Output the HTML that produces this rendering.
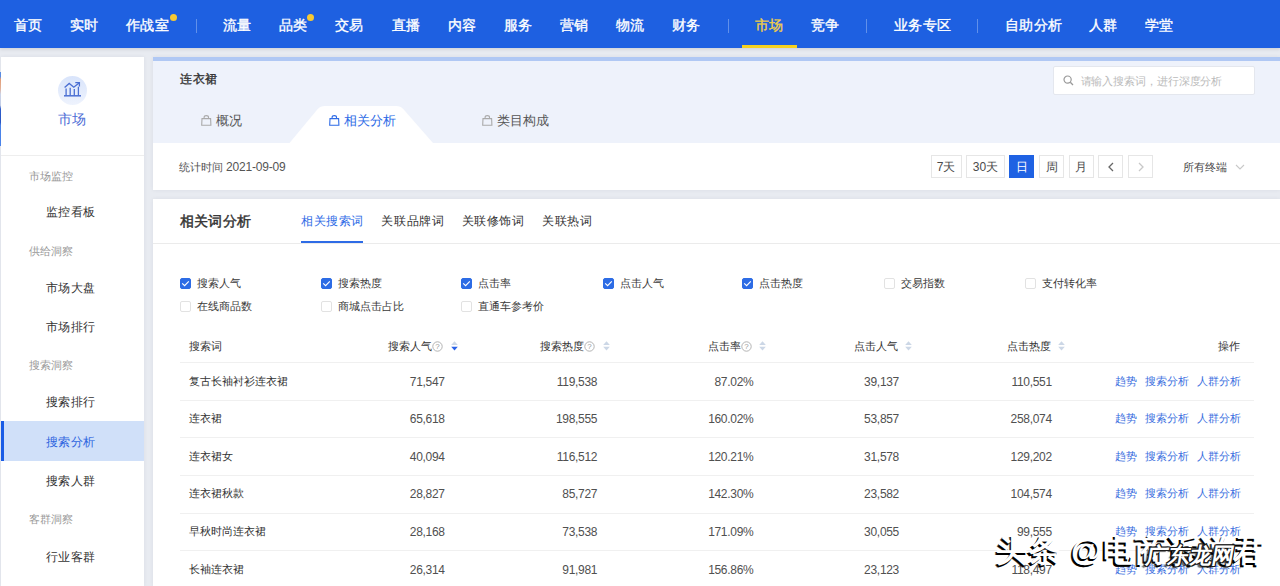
<!DOCTYPE html>
<html><head><meta charset="utf-8">
<style>
*{margin:0;padding:0;box-sizing:border-box}
html,body{width:1280px;height:586px;overflow:hidden}
body{position:relative;background:#e8ebf1;font-family:"Liberation Sans",sans-serif;color:#333}
.a{position:absolute;white-space:nowrap}
#nav{position:absolute;left:0;top:0;width:1280px;height:48px;background:#1e60e1;box-shadow:0 1px 4px rgba(0,0,0,.13);z-index:2}
.ni{position:absolute;top:16px;font-size:14px;letter-spacing:0.4px;line-height:18px;color:#fff;font-weight:500;-webkit-text-stroke:0.35px currentColor;white-space:nowrap}
.sep{position:absolute;top:19px;width:1px;height:14px;background:rgba(255,255,255,.3)}
.dot{position:absolute;width:7px;height:7px;border-radius:50%;background:#f6c933}
#side{position:absolute;left:1px;top:57px;width:143px;height:529px;background:#fff;box-shadow:0 0 4px rgba(40,50,70,.07)}
.sl{position:absolute;left:28px;margin-top:0.5px;font-size:11px;line-height:14px;color:#999;white-space:nowrap}
.si{position:absolute;left:44.5px;font-size:12px;letter-spacing:0.6px;line-height:16px;color:#333;white-space:nowrap}
.card{position:absolute;background:#fff;box-shadow:0 0 4px rgba(40,50,70,.07)}
.cb{position:absolute;width:11px;height:11px;border:1px solid #e2e2e2;border-radius:2px;background:#fff}
.cb.on{background:#2d6ce5;border-color:#2d6ce5}
.t11{position:absolute;font-size:11px;line-height:14px;color:#333;white-space:nowrap}
.num{position:absolute;font-size:12px;letter-spacing:-0.3px;line-height:14px;color:#505050;white-space:nowrap;text-align:right}
.lk{position:absolute;font-size:11px;line-height:14px;color:#3a6fe0;white-space:nowrap}
.btn{position:absolute;top:98px;height:23px;border:1px solid #e6e6e6;background:#fff;font-size:12px;line-height:22px;text-align:center;color:#4a4a4a}
</style></head><body>
<div id="nav">
<div class="ni" style="left:14px">首页</div>
<div class="ni" style="left:70px">实时</div>
<div class="ni" style="left:126px">作战室</div>
<div class="ni" style="left:223px">流量</div>
<div class="ni" style="left:279px">品类</div>
<div class="ni" style="left:335px">交易</div>
<div class="ni" style="left:392px">直播</div>
<div class="ni" style="left:448px">内容</div>
<div class="ni" style="left:504px">服务</div>
<div class="ni" style="left:560px">营销</div>
<div class="ni" style="left:616px">物流</div>
<div class="ni" style="left:672px">财务</div>
<div class="ni" style="left:811px">竞争</div>
<div class="ni" style="left:894px">业务专区</div>
<div class="ni" style="left:1005px">自助分析</div>
<div class="ni" style="left:1089px">人群</div>
<div class="ni" style="left:1145px">学堂</div>
<div class="ni" style="left:755px;color:#f3cf45">市场</div>
<div class="a" style="left:742px;top:45px;width:55px;height:3px;background:#f6d11e"></div>
<div class="sep" style="left:196px"></div>
<div class="sep" style="left:728px"></div>
<div class="sep" style="left:866px"></div>
<div class="sep" style="left:977px"></div>
<div class="dot" style="left:170px;top:14px"></div>
<div class="dot" style="left:307px;top:14px"></div>
</div>
<div class="a" style="left:0;top:72px;width:1px;height:74px;background:linear-gradient(#5b8fe8 0,#5b8fe8 6%,#e8a27a 10%,#e9b59a 22%,#d0d8ec 30%,#c9d3ec 45%,#2f5fcf 50%,#2a58c8 68%,#4c86ee 72%,#4c86ee 100%)"></div>
<div id="side">
<div class="a" style="left:57px;top:19px;width:29px;height:29px;border-radius:50%;background:linear-gradient(#d9e4fb,#eef3fd)"></div>
<svg class="a" style="left:61px;top:23px" width="21" height="21" viewBox="0 0 21 21"><g fill="none" stroke="#4b6fd3" stroke-width="1.3"><path d="M4.1 15.6V8.6M8.2 15.6V7.8M12.3 15.6V9M16.4 15.6V6.8"/><path d="M2 15.8H19" stroke-width="1.5"/><path d="M2.6 7.6L7.2 3.4L11.8 7.2L17 3"/><path d="M13.3 2.6H17.4V6.6"/></g></svg>
<div class="a" style="left:57px;top:53px;font-size:14px;line-height:18px;color:#4d6dd6">市场</div>
<div class="a" style="left:0;top:98px;width:143px;height:1px;background:#eeeeee"></div>
<div class="a" style="left:0;top:364px;width:143px;height:40px;background:#d0e0f9"></div>
<div class="a" style="left:0;top:364px;width:3px;height:40px;background:#1a5ce6"></div>
<div class="si" style="top:376.8px;color:#2d64df">搜索分析</div>
<div class="sl" style="top:111px">市场监控</div>
<div class="si" style="top:147.0px">监控看板</div>
<div class="sl" style="top:186px">供给洞察</div>
<div class="si" style="top:222.8px">市场大盘</div>
<div class="si" style="top:261.8px">市场排行</div>
<div class="sl" style="top:300px">搜索洞察</div>
<div class="si" style="top:336.8px">搜索排行</div>
<div class="si" style="top:415.8px">搜索人群</div>
<div class="sl" style="top:454px">客群洞察</div>
<div class="si" style="top:491.8px">行业客群</div>
</div>
<div class="card" style="left:153px;top:57px;width:1127px;height:133px">
<div class="a" style="left:0;top:0;width:1127px;height:86px;background:#eef2fb"></div>
<div class="a" style="left:0;top:0;width:1127px;height:4px;background:#b0c8f4"></div>
<div class="a" style="left:27px;top:13px;font-size:12px;letter-spacing:0.6px;line-height:18px;font-weight:500;-webkit-text-stroke:0.35px #333;color:#333">连衣裙</div>
<svg class="a" style="left:130px;top:47px" width="160" height="39" viewBox="0 0 160 39"><path d="M6.5 39 L34.5 5.2 Q37.5 2 42 2 L113 2 Q117.5 2 120.5 5.2 L150 39 Z" fill="#fff"/></svg>
<div class="a" style="left:48px;top:58px"><svg style="display:block" width="11" height="11" viewBox="0 0 11 11"><path d="M1 3.6H9.6L9.9 10.2H0.7Z M3.1 3.6V2.2Q3.1 0.6 5.3 0.6Q7.5 0.6 7.5 2.2V3.6" fill="none" stroke="#aaa" stroke-width="1.1"/></svg></div>
<div class="a" style="left:63px;top:56px;font-size:13px;line-height:16px;color:#555">概况</div>
<div class="a" style="left:176px;top:58px"><svg style="display:block" width="11" height="11" viewBox="0 0 11 11"><path d="M1 3.6H9.6L9.9 10.2H0.7Z M3.1 3.6V2.2Q3.1 0.6 5.3 0.6Q7.5 0.6 7.5 2.2V3.6" fill="none" stroke="#2e6be6" stroke-width="1.1"/></svg></div>
<div class="a" style="left:191px;top:56px;font-size:13px;line-height:16px;color:#2e6be6">相关分析</div>
<div class="a" style="left:329px;top:58px"><svg style="display:block" width="11" height="11" viewBox="0 0 11 11"><path d="M1 3.6H9.6L9.9 10.2H0.7Z M3.1 3.6V2.2Q3.1 0.6 5.3 0.6Q7.5 0.6 7.5 2.2V3.6" fill="none" stroke="#aaa" stroke-width="1.1"/></svg></div>
<div class="a" style="left:344px;top:56px;font-size:13px;line-height:16px;color:#555">类目构成</div>
<div class="a" style="left:26px;top:103px;font-size:11px;line-height:14px;color:#555">统计时间 <span style="font-size:12px;letter-spacing:-0.2px">2021-09-09</span></div>
<div class="a" style="left:900px;top:9px;width:202px;height:28.5px;background:#fff;border:1px solid #e4e7ee;border-radius:2px"></div>
<svg class="a" style="left:909.5px;top:18px" width="11" height="11" viewBox="0 0 11 11"><circle cx="4.6" cy="4.6" r="3.6" fill="none" stroke="#999" stroke-width="1.2"/><path d="M7.3 7.3L10 10" stroke="#999" stroke-width="1.3"/></svg>
<div class="a" style="left:927.5px;top:16.5px;font-size:11px;line-height:14px;color:#bbb;letter-spacing:-0.1px">请输入搜索词，进行深度分析</div>
<div class="btn" style="left:777.6px;width:31px">7天</div>
<div class="btn" style="left:813px;width:39px">30天</div>
<div class="btn" style="left:856px;width:25px;background:#1f62e3;border-color:#1f62e3;color:#fff">日</div>
<div class="btn" style="left:886px;width:25px">周</div>
<div class="btn" style="left:915.6px;width:25px">月</div>
<div class="btn" style="left:945px;width:25px"><svg width="8" height="10" viewBox="0 0 8 10" style="margin-top:6px"><path d="M6 1L2 5L6 9" fill="none" stroke="#666" stroke-width="1.3"/></svg></div>
<div class="btn" style="left:975px;width:25px"><svg width="8" height="10" viewBox="0 0 8 10" style="margin-top:6px"><path d="M2 1L6 5L2 9" fill="none" stroke="#c8c8c8" stroke-width="1.3"/></svg></div>
<div class="a" style="left:1030px;top:103px;font-size:11px;line-height:14px;color:#4a4a4a">所有终端</div>
<svg class="a" style="left:1081.5px;top:106px" width="10" height="8" viewBox="0 0 10 8"><path d="M1 2L5 6L9 2" fill="none" stroke="#c8c8c8" stroke-width="1.1"/></svg>
</div>
<div class="card" style="left:153px;top:199px;width:1127px;height:387px">
<div class="a" style="left:27px;top:13px;font-size:14px;letter-spacing:0.2px;line-height:19px;font-weight:500;-webkit-text-stroke:0.45px #333;color:#333">相关词分析</div>
<div class="a" style="left:148px;top:14px;font-size:12px;letter-spacing:0.6px;line-height:16px;color:#2e6be6">相关搜索词</div>
<div class="a" style="left:228.4px;top:14px;font-size:12px;letter-spacing:0.6px;line-height:16px;color:#333">关联品牌词</div>
<div class="a" style="left:308.5px;top:14px;font-size:12px;letter-spacing:0.6px;line-height:16px;color:#333">关联修饰词</div>
<div class="a" style="left:389.3px;top:14px;font-size:12px;letter-spacing:0.6px;line-height:16px;color:#333">关联热词</div>
<div class="a" style="left:148px;top:42px;width:62px;height:2px;background:#2e6be6"></div>
<div class="a" style="left:0;top:44px;width:1127px;height:1px;background:#ebebeb"></div>
<div class="cb on" style="left:27px;top:79px"><svg width="11" height="11" viewBox="0 0 11 11" style="position:absolute;left:-1px;top:-1px"><path d="M2.2 5.4L4.6 7.7L8.8 3.3" fill="none" stroke="#fff" stroke-width="1.15"/></svg></div>
<div class="t11" style="left:43.8px;top:76.8px;font-size:11px;color:#3a3a3a">搜索人气</div>
<div class="cb on" style="left:168px;top:79px"><svg width="11" height="11" viewBox="0 0 11 11" style="position:absolute;left:-1px;top:-1px"><path d="M2.2 5.4L4.6 7.7L8.8 3.3" fill="none" stroke="#fff" stroke-width="1.15"/></svg></div>
<div class="t11" style="left:184.8px;top:76.8px;font-size:11px;color:#3a3a3a">搜索热度</div>
<div class="cb on" style="left:308px;top:79px"><svg width="11" height="11" viewBox="0 0 11 11" style="position:absolute;left:-1px;top:-1px"><path d="M2.2 5.4L4.6 7.7L8.8 3.3" fill="none" stroke="#fff" stroke-width="1.15"/></svg></div>
<div class="t11" style="left:324.8px;top:76.8px;font-size:11px;color:#3a3a3a">点击率</div>
<div class="cb on" style="left:449.7px;top:79px"><svg width="11" height="11" viewBox="0 0 11 11" style="position:absolute;left:-1px;top:-1px"><path d="M2.2 5.4L4.6 7.7L8.8 3.3" fill="none" stroke="#fff" stroke-width="1.15"/></svg></div>
<div class="t11" style="left:466.5px;top:76.8px;font-size:11px;color:#3a3a3a">点击人气</div>
<div class="cb on" style="left:589.4px;top:79px"><svg width="11" height="11" viewBox="0 0 11 11" style="position:absolute;left:-1px;top:-1px"><path d="M2.2 5.4L4.6 7.7L8.8 3.3" fill="none" stroke="#fff" stroke-width="1.15"/></svg></div>
<div class="t11" style="left:606.1999999999999px;top:76.8px;font-size:11px;color:#3a3a3a">点击热度</div>
<div class="cb" style="left:731.3px;top:79px"></div>
<div class="t11" style="left:748.0999999999999px;top:76.8px;font-size:11px;color:#3a3a3a">交易指数</div>
<div class="cb" style="left:872px;top:79px"></div>
<div class="t11" style="left:888.8px;top:76.8px;font-size:11px;color:#3a3a3a">支付转化率</div>
<div class="cb" style="left:27px;top:101.7px"></div>
<div class="t11" style="left:43.8px;top:99.5px;font-size:11px;color:#3a3a3a">在线商品数</div>
<div class="cb" style="left:168px;top:101.7px"></div>
<div class="t11" style="left:184.8px;top:99.5px;font-size:11px;color:#3a3a3a">商城点击占比</div>
<div class="cb" style="left:308px;top:101.7px"></div>
<div class="t11" style="left:324.8px;top:99.5px;font-size:11px;color:#3a3a3a">直通车参考价</div>
<div class="t11" style="left:36px;top:140px">搜索词</div>
<div class="t11" style="left:234.8px;top:140px">搜索人气</div>
<svg class="a" style="left:278.8px;top:141.5px" width="11" height="11" viewBox="0 0 11 11"><circle cx="5.5" cy="5.5" r="4.7" fill="none" stroke="#aaa" stroke-width="0.9"/><text x="5.5" y="8.4" font-size="8" text-anchor="middle" fill="#999" font-family="Liberation Sans">?</text></svg>
<svg class="a" style="left:298px;top:142px" width="7" height="10" viewBox="0 0 7 10"><path d="M0.2 4L3.5 0.2L6.8 4Z" fill="#ccd7e6"/><path d="M0.2 5.8L6.8 5.8L3.5 9.6Z" fill="#2a62e8"/></svg>
<div class="t11" style="left:387px;top:140px">搜索热度</div>
<svg class="a" style="left:431px;top:141.5px" width="11" height="11" viewBox="0 0 11 11"><circle cx="5.5" cy="5.5" r="4.7" fill="none" stroke="#aaa" stroke-width="0.9"/><text x="5.5" y="8.4" font-size="8" text-anchor="middle" fill="#999" font-family="Liberation Sans">?</text></svg>
<svg class="a" style="left:449.6px;top:142px" width="7" height="10" viewBox="0 0 7 10"><path d="M0.2 4L3.5 0.2L6.8 4Z" fill="#ccd7e6"/><path d="M0.2 5.8L6.8 5.8L3.5 9.6Z" fill="#ccd7e6"/></svg>
<div class="t11" style="left:554.5px;top:140px">点击率</div>
<svg class="a" style="left:588px;top:141.5px" width="11" height="11" viewBox="0 0 11 11"><circle cx="5.5" cy="5.5" r="4.7" fill="none" stroke="#aaa" stroke-width="0.9"/><text x="5.5" y="8.4" font-size="8" text-anchor="middle" fill="#999" font-family="Liberation Sans">?</text></svg>
<svg class="a" style="left:605.9px;top:142px" width="7" height="10" viewBox="0 0 7 10"><path d="M0.2 4L3.5 0.2L6.8 4Z" fill="#ccd7e6"/><path d="M0.2 5.8L6.8 5.8L3.5 9.6Z" fill="#ccd7e6"/></svg>
<div class="t11" style="left:700.5px;top:140px">点击人气</div>
<svg class="a" style="left:752.3px;top:142px" width="7" height="10" viewBox="0 0 7 10"><path d="M0.2 4L3.5 0.2L6.8 4Z" fill="#ccd7e6"/><path d="M0.2 5.8L6.8 5.8L3.5 9.6Z" fill="#ccd7e6"/></svg>
<div class="t11" style="left:854.2px;top:140px">点击热度</div>
<svg class="a" style="left:904.7px;top:142px" width="7" height="10" viewBox="0 0 7 10"><path d="M0.2 4L3.5 0.2L6.8 4Z" fill="#ccd7e6"/><path d="M0.2 5.8L6.8 5.8L3.5 9.6Z" fill="#ccd7e6"/></svg>
<div class="t11" style="left:1065.2px;top:140px">操作</div>
<div class="a" style="left:27px;top:163px;width:1074px;height:1px;background:#f0f0f0"></div>
<div class="t11" style="left:36px;top:174.5px">复古长袖衬衫连衣裙</div>
<div class="num" style="right:835.3px;top:175.5px">71,547</div>
<div class="num" style="right:682.8px;top:175.5px">119,538</div>
<div class="num" style="right:526.6px;top:175.5px">87.02%</div>
<div class="num" style="right:381.0px;top:175.5px">39,137</div>
<div class="num" style="right:228.2px;top:175.5px">110,551</div>
<div class="lk" style="left:962px;top:174.5px">趋势</div>
<div class="lk" style="left:991.7px;top:174.5px">搜索分析</div>
<div class="lk" style="left:1044px;top:174.5px">人群分析</div>
<div class="a" style="left:27px;top:201px;width:1074px;height:1px;background:#f0f0f0"></div>
<div class="t11" style="left:36px;top:212.1px">连衣裙</div>
<div class="num" style="right:835.3px;top:213.1px">65,618</div>
<div class="num" style="right:682.8px;top:213.1px">198,555</div>
<div class="num" style="right:526.6px;top:213.1px">160.02%</div>
<div class="num" style="right:381.0px;top:213.1px">53,857</div>
<div class="num" style="right:228.2px;top:213.1px">258,074</div>
<div class="lk" style="left:962px;top:212.1px">趋势</div>
<div class="lk" style="left:991.7px;top:212.1px">搜索分析</div>
<div class="lk" style="left:1044px;top:212.1px">人群分析</div>
<div class="a" style="left:27px;top:238px;width:1074px;height:1px;background:#f0f0f0"></div>
<div class="t11" style="left:36px;top:249.8px">连衣裙女</div>
<div class="num" style="right:835.3px;top:250.8px">40,094</div>
<div class="num" style="right:682.8px;top:250.8px">116,512</div>
<div class="num" style="right:526.6px;top:250.8px">120.21%</div>
<div class="num" style="right:381.0px;top:250.8px">31,578</div>
<div class="num" style="right:228.2px;top:250.8px">129,202</div>
<div class="lk" style="left:962px;top:249.8px">趋势</div>
<div class="lk" style="left:991.7px;top:249.8px">搜索分析</div>
<div class="lk" style="left:1044px;top:249.8px">人群分析</div>
<div class="a" style="left:27px;top:276px;width:1074px;height:1px;background:#f0f0f0"></div>
<div class="t11" style="left:36px;top:287.4px">连衣裙秋款</div>
<div class="num" style="right:835.3px;top:288.4px">28,827</div>
<div class="num" style="right:682.8px;top:288.4px">85,727</div>
<div class="num" style="right:526.6px;top:288.4px">142.30%</div>
<div class="num" style="right:381.0px;top:288.4px">23,582</div>
<div class="num" style="right:228.2px;top:288.4px">104,574</div>
<div class="lk" style="left:962px;top:287.4px">趋势</div>
<div class="lk" style="left:991.7px;top:287.4px">搜索分析</div>
<div class="lk" style="left:1044px;top:287.4px">人群分析</div>
<div class="a" style="left:27px;top:314px;width:1074px;height:1px;background:#f0f0f0"></div>
<div class="t11" style="left:36px;top:325.1px">早秋时尚连衣裙</div>
<div class="num" style="right:835.3px;top:326.1px">28,168</div>
<div class="num" style="right:682.8px;top:326.1px">73,538</div>
<div class="num" style="right:526.6px;top:326.1px">171.09%</div>
<div class="num" style="right:381.0px;top:326.1px">30,055</div>
<div class="num" style="right:228.2px;top:326.1px">99,555</div>
<div class="lk" style="left:962px;top:325.1px">趋势</div>
<div class="lk" style="left:991.7px;top:325.1px">搜索分析</div>
<div class="lk" style="left:1044px;top:325.1px">人群分析</div>
<div class="a" style="left:27px;top:351px;width:1074px;height:1px;background:#f0f0f0"></div>
<div class="t11" style="left:36px;top:362.7px">长袖连衣裙</div>
<div class="num" style="right:835.3px;top:363.7px">26,314</div>
<div class="num" style="right:682.8px;top:363.7px">91,981</div>
<div class="num" style="right:526.6px;top:363.7px">156.86%</div>
<div class="num" style="right:381.0px;top:363.7px">23,123</div>
<div class="num" style="right:228.2px;top:363.7px">118,497</div>
<div class="lk" style="left:962px;top:362.7px">趋势</div>
<div class="lk" style="left:991.7px;top:362.7px">搜索分析</div>
<div class="lk" style="left:1044px;top:362.7px">人群分析</div>
</div>
<div class="a" style="left:996px;top:531px;font-size:31px;line-height:40px;font-weight:900;color:#fff;text-shadow:-1.5px 1.5px 0 #000,-2px 2px 0.5px rgba(0,0,0,.6);letter-spacing:1.5px">头条 @电商诉说君</div>
<div class="a" style="left:1146px;top:540px;font-size:22px;line-height:32px;font-weight:bold;color:#fff;transform:skewX(-10deg);text-shadow:1px 0 0 #1a1a1a,-1px 0 0 #1a1a1a,0 1px 0 #1a1a1a,0 -1px 0 #1a1a1a,1px 1px 0 #1a1a1a,-1px -1px 0 #1a1a1a,1px -1px 0 #1a1a1a,-1px 1px 0 #1a1a1a,-2px 2px 1px rgba(0,0,0,.6)">广东龙网</div>
</body></html>
